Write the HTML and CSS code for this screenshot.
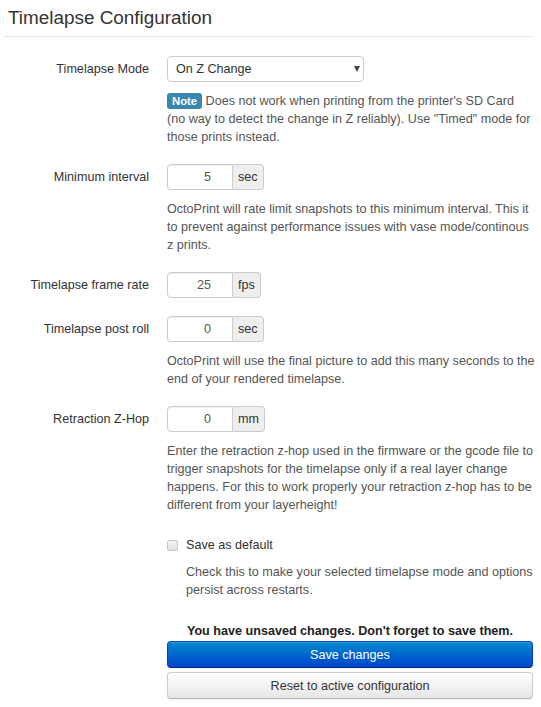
FILE: index.html
```html
<!DOCTYPE html>
<html lang="en">
<head>
    <meta charset="UTF-8">
    <meta name="viewport" content="width=device-width, initial-scale=1.0">
    <title>Timelapse Configuration</title>
    <link rel="stylesheet" href="styles.css">
</head>
<body>
    <form class="settings">
        <div class="legend">Timelapse Configuration</div>

        <div class="control-group">
            <label class="control-label" for="mode">Timelapse Mode</label>
            <div class="controls">
                <div class="select-wrap">
                    <select id="mode">
                        <option>On Z Change</option>
                        <option>Timed</option>
                        <option>Off</option>
                    </select>
                </div>
                <div class="help-block"><span class="label-info">Note</span> Does not work when printing from the printer's SD Card (no way to detect the change in Z reliably). Use "Timed" mode for those prints instead.</div>
            </div>
        </div>

        <div class="control-group">
            <label class="control-label" for="interval">Minimum interval</label>
            <div class="controls">
                <div class="input-append">
                    <input type="text" id="interval" value="5">
                    <span class="add-on">sec</span>
                </div>
                <div class="help-block">OctoPrint will rate limit snapshots to this minimum interval. This it to prevent against performance issues with vase mode/continous z prints.</div>
            </div>
        </div>

        <div class="control-group">
            <label class="control-label" for="fps">Timelapse frame rate</label>
            <div class="controls">
                <div class="input-append">
                    <input type="text" id="fps" value="25">
                    <span class="add-on">fps</span>
                </div>
            </div>
        </div>

        <div class="control-group">
            <label class="control-label" for="postroll">Timelapse post roll</label>
            <div class="controls">
                <div class="input-append">
                    <input type="text" id="postroll" value="0">
                    <span class="add-on">sec</span>
                </div>
                <div class="help-block">OctoPrint will use the final picture to add this many seconds to the end of your rendered timelapse.</div>
            </div>
        </div>

        <div class="control-group">
            <label class="control-label" for="zhop">Retraction Z-Hop</label>
            <div class="controls">
                <div class="input-append">
                    <input type="text" id="zhop" value="0">
                    <span class="add-on">mm</span>
                </div>
                <div class="help-block">Enter the retraction z-hop used in the firmware or the gcode file to trigger snapshots for the timelapse only if a real layer change happens. For this to work properly your retraction z-hop has to be different from your layerheight!</div>
            </div>
        </div>

        <div class="control-group">
            <div class="control-label"></div>
            <div class="controls">
                <label class="checkbox"><input type="checkbox"> Save as default</label>
                <div class="help-block indented">Check this to make your selected timelapse mode and options persist across restarts.</div>
            </div>
        </div>

        <div class="control-group last">
            <div class="control-label"></div>
            <div class="controls">
                <div class="unsaved">You have unsaved changes. Don't forget to save them.</div>
                <button type="button" class="btn btn-primary">Save changes</button>
                <button type="button" class="btn">Reset to active configuration</button>
            </div>
        </div>
    </form>
</body>
</html>
```

FILE: styles.css
```css
body {
    margin: 0;
    font-family: "Liberation Sans", Arial, sans-serif;
    font-size: 12.6px;
    line-height: 18px;
    color: #333;
    background: #fff;
}
.settings { width: 529px; padding-left: 4px; }
.legend {
    font-size: 18.9px;
    line-height: 36px;
    padding-left: 4px;
    border-bottom: 1px solid #e5e5e5;
    margin-bottom: 19px;
}

.control-group { display: flex; margin-bottom: 18px; }
.control-group.last { margin-bottom: 0; }
.control-label {
    width: 145px;
    flex-shrink: 0;
    text-align: right;
    padding-top: 4px;
}
.controls { margin-left: 18px; flex: 1; }

.select-wrap { position: relative; width: 197px; }
.select-wrap::after {
    content: "";
    position: absolute;
    right: 4px;
    top: 10px;
    border-left: 3.5px solid transparent;
    border-right: 3.5px solid transparent;
    border-top: 6px solid #444;
    pointer-events: none;
}
select {
    appearance: none;
    -webkit-appearance: none;
    width: 100%;
    height: 26px;
    padding: 0 8px;
    font: inherit;
    color: #333;
    background: #fff;
    border: 1px solid #ccc;
    border-radius: 4px;
}

.input-append { display: flex; height: 26px; }
.input-append input {
    width: 66px;
    height: 26px;
    box-sizing: border-box;
    padding: 0 21px 0 6px;
    font: inherit;
    color: #555;
    text-align: right;
    border: 1px solid #ccc;
    border-radius: 4px 0 0 4px;
    box-shadow: inset 0 1px 1px rgba(0, 0, 0, 0.075);
}
.add-on {
    box-sizing: border-box;
    height: 26px;
    padding: 3px 5px 0 5px;
    background: #eee;
    border: 1px solid #ccc;
    border-left: none;
    border-radius: 0 4px 4px 0;
    color: #333;
}

.help-block { margin-top: 10px; margin-right: -2px; color: #555; }
.help-block.indented { margin-top: 9px; padding-left: 19px; }
.label-info {
    display: inline-block;
    background: #3a87ad;
    color: #fff;
    font-weight: bold;
    font-size: 11.3px;
    line-height: 16px;
    padding: 0 5px;
    border-radius: 3px;
}

.checkbox {
    display: flex;
    align-items: center;
    gap: 8px;
    padding-top: 4px;
    color: #333;
}
.checkbox input {
    appearance: none;
    -webkit-appearance: none;
    margin: 0;
    width: 11px;
    height: 11px;
    border: 1px solid #c6c6c6;
    border-radius: 2px;
    background: linear-gradient(#f4f4f4, #e2e2e2);
}

.unsaved { font-weight: bold; text-align: center; margin-top: 5px; margin-bottom: 1px; color: #222; }
.btn {
    display: block;
    width: 100%;
    height: 27px;
    margin-bottom: 4px;
    font: inherit;
    color: #333;
    text-align: center;
    background: linear-gradient(#ffffff, #e6e6e6);
    border: 1px solid #ccc;
    border-bottom-color: #b3b3b3;
    border-radius: 4px;
    box-shadow: inset 0 1px 0 rgba(255, 255, 255, 0.2), 0 1px 2px rgba(0, 0, 0, 0.05);
}
.btn-primary {
    color: #fff;
    background: linear-gradient(#0088cc, #0044cc);
    border-color: #0044cc #0044cc #002a80;
}
```
